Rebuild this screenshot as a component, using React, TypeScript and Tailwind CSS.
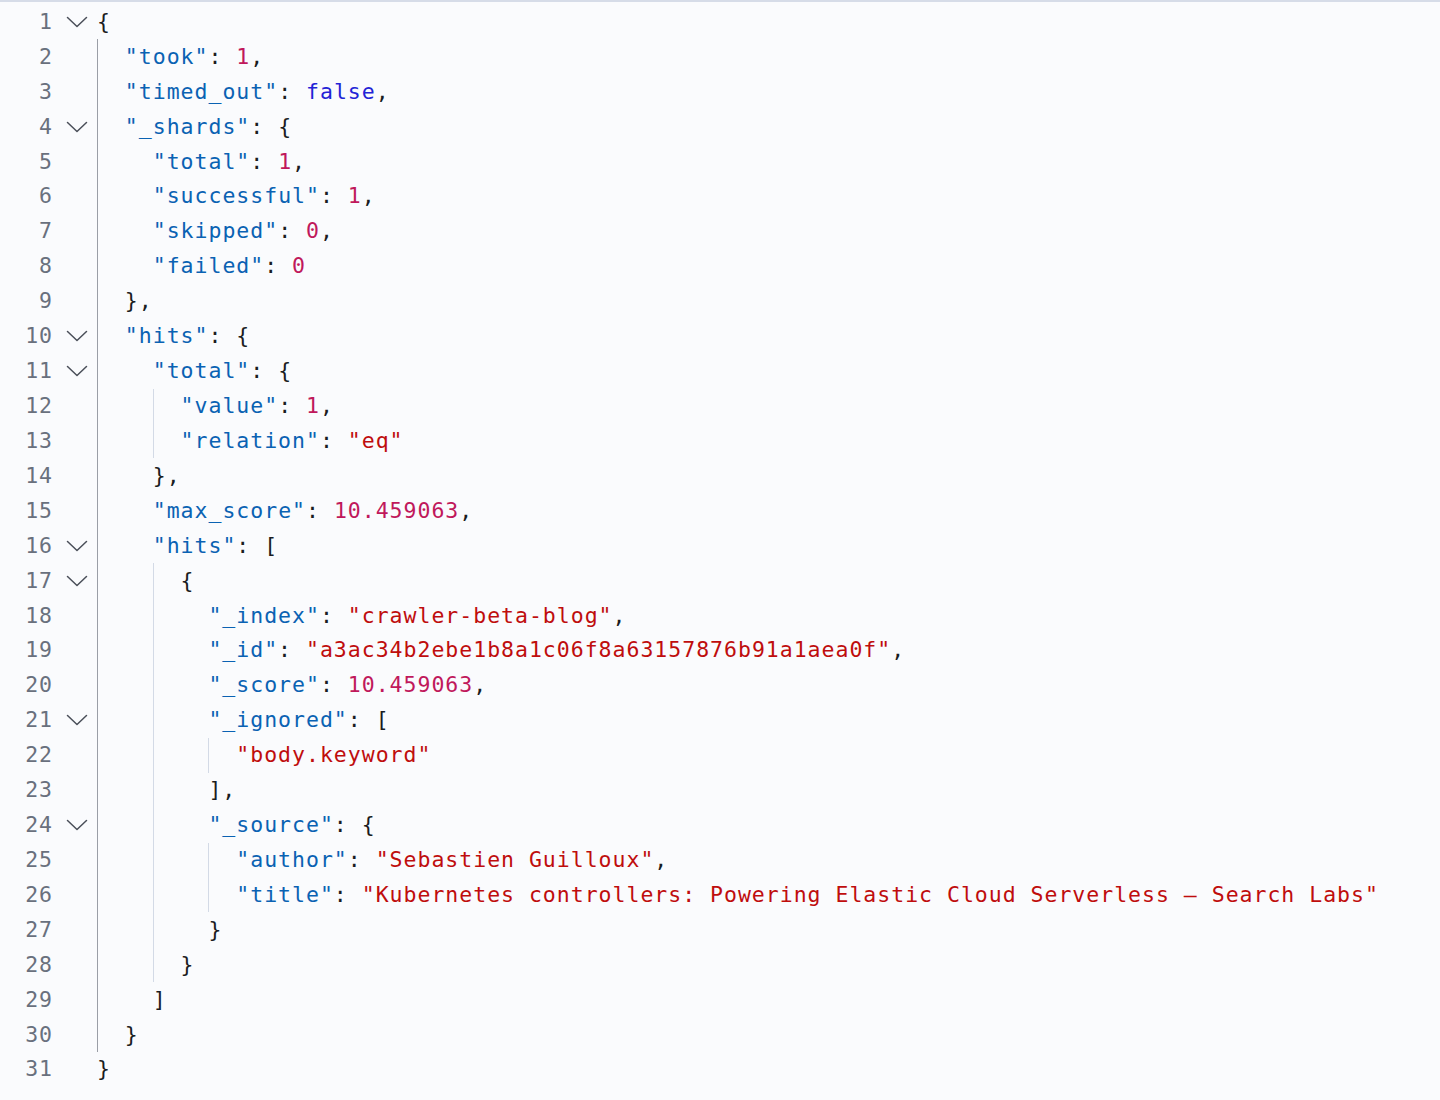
import React from 'react'

type Tok = [string, string]

const tone: Record<string, string> = {
  p: 'text-[#1a1c21]',
  k: 'text-[#0a62b3]',
  s: 'text-[#bf0d0d]',
  n: 'text-[#c0185b]',
  b: 'text-[#2323d6]',
}

const k = (t: string): Tok => ['k', `"${t}"`]
const s = (t: string): Tok => ['s', `"${t}"`]
const n = (t: string): Tok => ['n', t]
const p = (t: string): Tok => ['p', t]

const lines: { level: number; fold?: boolean; toks: Tok[] }[] = [
  { level: 0, fold: true, toks: [p('{')] },
  { level: 1, toks: [k('took'), p(': '), n('1'), p(',')] },
  { level: 1, toks: [k('timed_out'), p(': '), ['b', 'false'], p(',')] },
  { level: 1, fold: true, toks: [k('_shards'), p(': {')] },
  { level: 2, toks: [k('total'), p(': '), n('1'), p(',')] },
  { level: 2, toks: [k('successful'), p(': '), n('1'), p(',')] },
  { level: 2, toks: [k('skipped'), p(': '), n('0'), p(',')] },
  { level: 2, toks: [k('failed'), p(': '), n('0')] },
  { level: 1, toks: [p('},')] },
  { level: 1, fold: true, toks: [k('hits'), p(': {')] },
  { level: 2, fold: true, toks: [k('total'), p(': {')] },
  { level: 3, toks: [k('value'), p(': '), n('1'), p(',')] },
  { level: 3, toks: [k('relation'), p(': '), s('eq')] },
  { level: 2, toks: [p('},')] },
  { level: 2, toks: [k('max_score'), p(': '), n('10.459063'), p(',')] },
  { level: 2, fold: true, toks: [k('hits'), p(': [')] },
  { level: 3, fold: true, toks: [p('{')] },
  { level: 4, toks: [k('_index'), p(': '), s('crawler-beta-blog'), p(',')] },
  { level: 4, toks: [k('_id'), p(': '), s('a3ac34b2ebe1b8a1c06f8a63157876b91a1aea0f'), p(',')] },
  { level: 4, toks: [k('_score'), p(': '), n('10.459063'), p(',')] },
  { level: 4, fold: true, toks: [k('_ignored'), p(': [')] },
  { level: 5, toks: [s('body.keyword')] },
  { level: 4, toks: [p('],')] },
  { level: 4, fold: true, toks: [k('_source'), p(': {')] },
  { level: 5, toks: [k('author'), p(': '), s('Sebastien Guilloux'), p(',')] },
  {
    level: 5,
    toks: [k('title'), p(': '), s('Kubernetes controllers: Powering Elastic Cloud Serverless – Search Labs')],
  },
  { level: 4, toks: [p('}')] },
  { level: 3, toks: [p('}')] },
  { level: 2, toks: [p(']')] },
  { level: 1, toks: [p('}')] },
  { level: 0, toks: [p('}')] },
]

function Chevron() {
  return (
    <svg width="22" height="12" viewBox="0 0 22 12" fill="none" className="text-[#4a4f59]">
      <path d="M1.5 1.5 11 10.5 20.5 1.5" stroke="currentColor" strokeWidth="1.5" strokeLinecap="round" strokeLinejoin="round" />
    </svg>
  )
}

function guide(i: number) {
  if (i === 0) return 'border-l border-[#9a9ea6]'
  if (i % 2 === 0) return 'border-l border-[#d3dae6]'
  return ''
}

export default function App() {
  return (
    <div className="min-h-[1100px] w-full border-t-2 border-[#d6dce8] bg-[#fafbfd] pt-[2.5px] font-['DejaVu_Sans_Mono',monospace] text-[21.5px] tracking-[0.99px]">
      {lines.map((line, idx) => (
        <div key={idx} className="flex h-[34.93px] items-center whitespace-pre">
          <div className="w-[53px] text-right text-[#69707d]">{idx + 1}</div>
          <div className="flex w-[44px] items-center justify-center pl-[4px]">{line.fold && <Chevron />}</div>
          <div className="flex h-full items-center">
            {Array.from({ length: line.level }).map((_, i) => (
              <span key={i} className={`h-full w-[27.86px] ${guide(i)}`} />
            ))}
            <span>
              {line.toks.map(([t, v], j) => (
                <span key={j} className={tone[t]}>
                  {v}
                </span>
              ))}
            </span>
          </div>
        </div>
      ))}
    </div>
  )
}
